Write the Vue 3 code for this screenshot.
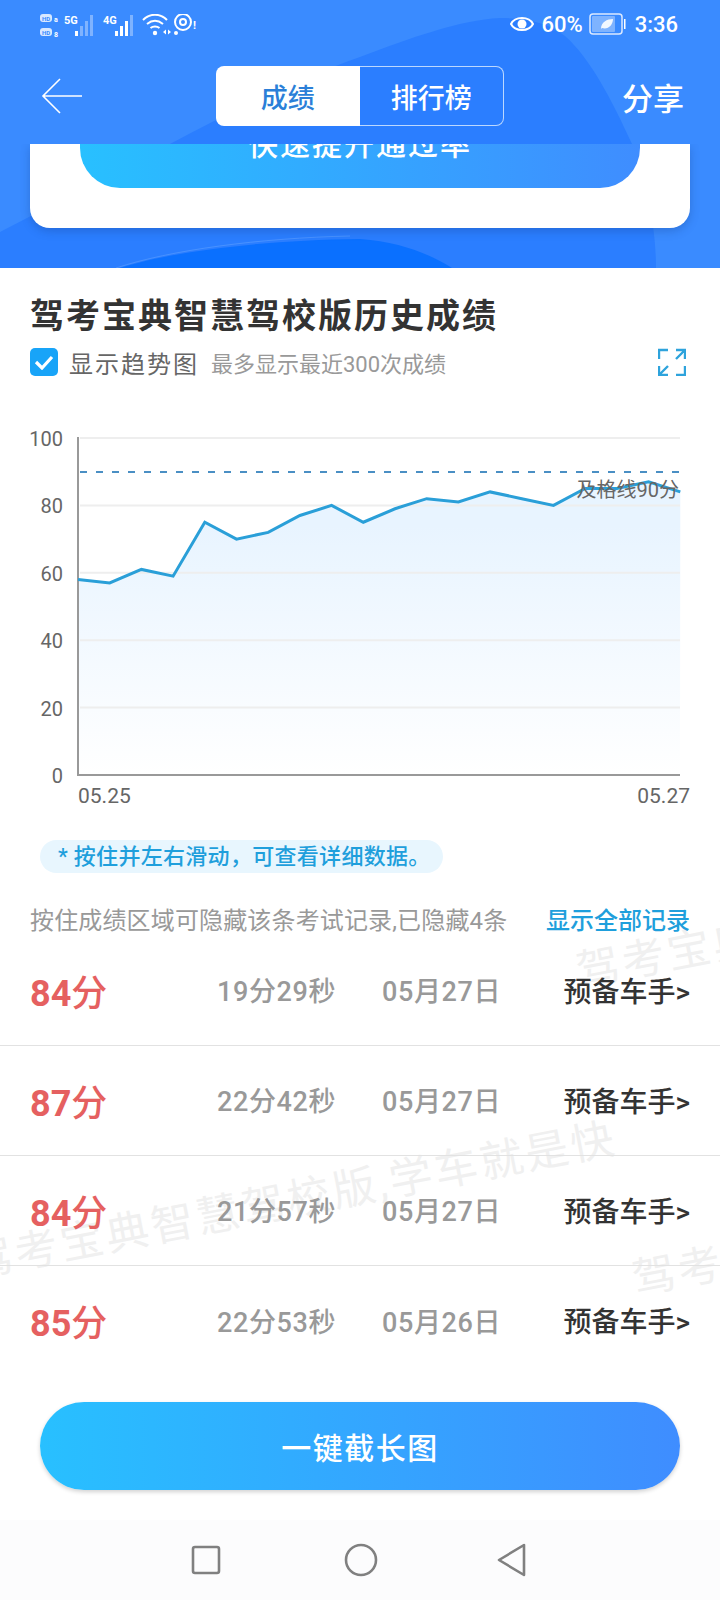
<script setup>
import { computed } from 'vue'

let scores = [58, 57, 61, 59, 75, 70, 72, 77, 80, 75, 79, 82, 81, 84, 82, 80, 85, 85, 87, 84]
let ticks = [100, 80, 60, 40, 20, 0]

let records = [
  { id: 1, score: 84, time: '19分29秒', date: '05月27日' },
  { id: 2, score: 87, time: '22分42秒', date: '05月27日' },
  { id: 3, score: 84, time: '21分57秒', date: '05月27日' },
  { id: 4, score: 85, time: '22分53秒', date: '05月26日' },
]

let marks = [
  { id: 1, left: 577, top: 950 },
  { id: 2, left: -30, top: 1241 },
  { id: 3, left: 633, top: 1258 },
]

let toY = (v) => 355 - v * 3.37
let toX = (i) => 78 + i * 31.7

let linePoints = computed(() => scores.map((v, i) => `${toX(i)},${toY(v)}`).join(' '))
let areaPoints = computed(() => `78,355 ${linePoints.value} 680,355`)
</script>

<template>
  <div class="page">
    <div
      v-for="m in marks"
      :key="m.id"
      class="watermark"
      :style="{ left: m.left + 'px', top: m.top + 'px' }"
    >驾考宝典智慧驾校版,学车就是快</div>

    <section class="hero">
      <svg class="hero-bg" width="720" height="268" viewBox="0 0 720 268">
        <path d="M170 144 C 230 112 300 78 360 57 C 410 38 460 20 500 18 C 530 18 550 24 565 36 C 590 58 612 100 632 144 C 648 185 656 230 656 268 L 0 268 L 0 232 Z" fill="#2b7eff" />
        <path d="M120 268 C 170 252 260 240 360 239 C 400 242 430 254 452 268 Z" fill="#0a70ff" />
        <path d="M116 268 C 170 250 260 238 350 236" fill="none" stroke="#5c9fff" stroke-width="1" opacity=".6" />
      </svg>

      <div class="status-bar">
        <svg class="status-left" width="170" height="30" viewBox="0 0 170 30">
          <g fill="#fff" font-family="Roboto, sans-serif" font-weight="700">
            <rect x="0" y="0" width="12" height="8" rx="3" opacity=".8" />
            <rect x="0" y="14" width="12" height="8" rx="3" opacity=".8" />
            <text x="14" y="8" font-size="7">a</text>
            <text x="14" y="23" font-size="7">8</text>
            <text x="24" y="10" font-size="11">5G</text>
            <text x="63" y="10" font-size="11">4G</text>
            <text x="2" y="6.500" font-size="6" fill="#3a8bff">HD</text>
            <text x="2" y="20.500" font-size="6" fill="#3a8bff">HD</text>
          </g>
          <g fill="#fff">
            <rect x="35" y="17" width="3" height="5" />
            <g opacity=".35">
              <rect x="40" y="12" width="3" height="10" />
              <rect x="45" y="7" width="3" height="15" />
              <rect x="50" y="1" width="3" height="21" />
            </g>
            <rect x="75" y="17" width="3" height="5" />
            <rect x="80" y="12" width="3" height="10" />
            <rect x="85" y="7" width="3" height="15" />
            <rect x="90" y="1" width="3" height="21" opacity=".35" />
            <circle cx="115" cy="19" r="2.2" />
            <path d="M123 18 l3 -2.500 v5 Z M128 15.500 l3 2.500 l-3 2.500 Z" />
            <circle cx="136" cy="19" r="2" />
            <text x="153" y="15" font-size="11" font-weight="700" font-family="Roboto, sans-serif">!</text>
          </g>
          <g fill="none" stroke="#fff" stroke-width="2">
            <path d="M103 6 C 110 -1 120 -1 127 6" />
            <path d="M107 10 C 112 6 118 6 123 10" />
            <path d="M110.500 14 C 113 12 117 12 119.500 14" />
            <circle cx="143" cy="8" r="8" />
            <circle cx="143" cy="8" r="3" />
          </g>
        </svg>
        <div class="status-right">
          <svg width="24" height="18" viewBox="0 0 24 18">
            <path d="M1 9 C 5 1 19 1 23 9 C 19 17 5 17 1 9 Z" fill="none" stroke="#fff" stroke-width="2" />
            <circle cx="12" cy="9" r="4.500" fill="#fff" />
          </svg>
          <span class="percent">60%</span>
          <svg class="battery" width="37" height="22" viewBox="0 0 37 22">
            <rect x="1" y="1" width="32" height="20" rx="3" fill="none" stroke="#dbe9ff" stroke-width="1.500" />
            <rect x="3" y="3" width="23" height="16" rx="1" fill="#fff" opacity=".35" />
            <path d="M12 16 C 12 9 18 6 24 6 C 24 12 19 17 13 15 Z" fill="#fff" opacity=".9" />
            <rect x="35" y="6" width="1.500" height="10" fill="#fff" />
          </svg>
          <span class="clock">3:36</span>
        </div>
      </div>

      <div class="nav">
        <svg class="back" width="42" height="36" viewBox="0 0 42 36">
          <path d="M41 18 H2 M19 1 L2 18 L19 35" fill="none" stroke="#fff" stroke-width="1.600" />
        </svg>
        <div class="tabs">
          <div class="tab active">成绩</div>
          <div class="tab">排行榜</div>
        </div>
        <div class="share">分享</div>
      </div>

      <div class="card">
        <div class="card-btn">快速提升通过率</div>
      </div>
    </section>

    <main class="content">
      <h1 class="title">驾考宝典智慧驾校版历史成绩</h1>

      <div class="controls">
        <span class="check">
          <svg width="20" height="16" viewBox="0 0 20 16">
            <path d="M2 8 L8 14 L18 3" fill="none" stroke="#fff" stroke-width="3.200" />
          </svg>
        </span>
        <span class="check-label">显示趋势图</span>
        <span class="check-hint">最多显示最近300次成绩</span>
        <svg class="expand" width="28" height="28" viewBox="0 0 28 28">
          <path d="M1 11 V2 H10 M18 2 H27 V11 M27 2 L18 11 M1 18 V27 H10 M1 27 L10 18 M27 18 V27 H18" fill="none" stroke="#2ea3dc" stroke-width="2.400" />
        </svg>
      </div>

      <svg class="chart" width="720" height="400" viewBox="0 0 720 400">
        <defs>
          <linearGradient id="area" x1="0" y1="0" x2="0" y2="1">
            <stop offset="0.15" stop-color="#e8f4ff" />
            <stop offset="1" stop-color="#ffffff" />
          </linearGradient>
        </defs>
        <polygon :points="areaPoints" fill="url(#area)" />
        <line
          v-for="t in ticks.slice(0, 5)"
          :key="t"
          x1="80"
          x2="680"
          :y1="toY(t)"
          :y2="toY(t)"
          stroke="#eeeeee"
          stroke-width="2"
        />
        <line x1="78" y1="17" x2="78" y2="356" stroke="#999" stroke-width="2" />
        <line x1="77" y1="355" x2="680" y2="355" stroke="#999" stroke-width="2" />
        <line x1="80" y1="52" x2="680" y2="52" stroke="#4a8fc4" stroke-width="2" stroke-dasharray="7 9" />
        <polyline :points="linePoints" fill="none" stroke="#2a9fd8" stroke-width="3" />
        <text
          v-for="t in ticks"
          :key="'l' + t"
          class="tick-text"
          x="63"
          :y="toY(t) + 8"
          text-anchor="end"
        >{{ t }}</text>
        <text class="axis-text" x="78" y="383">05.25</text>
        <text class="axis-text" x="690" y="383" text-anchor="end">05.27</text>
        <text class="pass-text" x="679" y="77" text-anchor="end">及格线90分</text>
      </svg>

      <div class="pill">* 按住并左右滑动，可查看详细数据。</div>

      <div class="note">
        <span class="note-text">按住成绩区域可隐藏该条考试记录,已隐藏4条</span>
        <span class="show-all">显示全部记录</span>
      </div>

      <ul class="records">
        <li v-for="r in records" :key="r.id" class="record">
          <span class="score"><b>{{ r.score }}</b>分</span>
          <span class="cell">{{ r.time }}</span>
          <span class="cell">{{ r.date }}</span>
          <span class="level">预备车手&gt;</span>
        </li>
      </ul>

      <div class="shot-btn">一键截长图</div>
    </main>

    <footer class="sys-nav">
      <svg class="sys-square" width="30" height="30" viewBox="0 0 30 30">
        <rect x="2" y="2" width="26" height="26" rx="2" fill="none" stroke="#808080" stroke-width="2.600" />
      </svg>
      <svg width="34" height="34" viewBox="0 0 34 34">
        <circle cx="17" cy="17" r="15" fill="none" stroke="#808080" stroke-width="2.600" />
      </svg>
      <svg class="sys-back" width="30" height="34" viewBox="0 0 30 34">
        <path d="M27 2 V32 L2 17 Z" fill="none" stroke="#808080" stroke-width="2.600" stroke-linejoin="round" />
      </svg>
    </footer>
  </div>
</template>

<style scoped>
.page {
  position: relative;
  width: 720px;
  height: 1600px;
  overflow: hidden;
  background: #fff;
  font-family: Roboto, "Noto Sans CJK SC", sans-serif;
}

.watermark {
  position: absolute;
  z-index: 0;
  white-space: nowrap;
  font-size: 43px;
  line-height: 44px;
  letter-spacing: 3.200px;
  color: #f0f0f0;
  transform: rotate(-11deg);
  transform-origin: left center;
}

.hero {
  position: relative;
  height: 268px;
  background: #3a8bff;
  overflow: hidden;
}
.hero-bg {
  position: absolute;
  left: 0;
  top: 0;
}

.status-bar {
  position: relative;
  display: flex;
  justify-content: space-between;
  align-items: center;
  height: 48px;
  padding: 0 42px 0 40px;
}
.status-left {
  margin-top: 10px;
}
.status-right {
  display: flex;
  align-items: center;
  color: #fff;
}
.percent {
  margin-left: 7px;
  font-size: 22px;
  font-weight: 500;
}
.battery {
  margin-left: 6px;
}
.clock {
  margin-left: 9px;
  font-size: 22px;
  font-weight: 500;
}

.nav {
  position: relative;
  display: grid;
  grid-template-columns: 1fr auto 1fr;
  align-items: center;
  height: 96px;
  padding: 0 36px;
}
.back {
  margin-left: 5px;
}
.tabs {
  display: flex;
  width: 288px;
  height: 60px;
}
.tab {
  flex: 1;
  display: flex;
  align-items: center;
  justify-content: center;
  font-size: 27px;
  font-weight: 500;
  color: #fff;
  border: 1px solid #bcd8ff;
  border-left: none;
  border-radius: 0 8px 8px 0;
}
.tab.active {
  background: #fff;
  color: #2b7fd8;
  border: none;
  border-radius: 8px 0 0 8px;
}
.share {
  justify-self: end;
  font-size: 31px;
  font-weight: 500;
  color: #fff;
}

.card {
  display: flow-root;
  position: relative;
  height: 84px;
  margin: 0 30px;
  background: #fff;
  border-radius: 0 0 20px 20px;
  box-shadow: 0 3px 10px rgba(20, 60, 130, 0.3);
  clip-path: inset(0 -20px -20px -20px);
}
.card-btn {
  display: flex;
  align-items: center;
  justify-content: center;
  height: 88px;
  margin: -44px 50px 0;
  padding-bottom: 5px;
  box-sizing: border-box;
  border-radius: 0 0 40px 40px;
  background: linear-gradient(90deg, #28c0ff, #3f8dff);
  color: #fff;
  font-size: 30px;
  font-weight: 500;
  letter-spacing: 2px;
}

.content {
  position: relative;
}
.title {
  margin: 24px 0 0 30px;
  font-size: 34px;
  line-height: 48px;
  font-weight: 700;
  letter-spacing: 2px;
  color: #333;
}
.controls {
  display: flex;
  align-items: center;
  height: 28px;
  margin: 8px 34px 0 30px;
}
.check {
  display: flex;
  align-items: center;
  justify-content: center;
  width: 28px;
  height: 28px;
  border-radius: 5px;
  background: #18a4f8;
}
.check-label {
  margin-left: 11px;
  font-size: 24px;
  letter-spacing: 2px;
  color: #666;
}
.check-hint {
  margin-left: 12px;
  font-size: 22px;
  color: #999;
}
.expand {
  margin-left: auto;
}

.chart {
  display: block;
  margin-top: 44px;
}
.tick-text {
  font-size: 20px;
  fill: #666;
}
.axis-text {
  font-size: 21px;
  fill: #666;
}
.pass-text {
  font-size: 20px;
  fill: #666;
}

.pill {
  width: 403px;
  height: 33px;
  margin: 20px 0 0 40px;
  padding-left: 18px;
  box-sizing: border-box;
  border-radius: 17px;
  background: #e8f6fe;
  color: #1f9fdc;
  font-size: 22px;
  line-height: 33px;
  font-weight: 500;
  letter-spacing: 0.300px;
  white-space: nowrap;
}

.note {
  display: flex;
  justify-content: space-between;
  align-items: center;
  height: 30px;
  margin: 30px 30px 3px;
  font-size: 24px;
  color: #999;
}
.note-text {
  letter-spacing: 0.150px;
}
.show-all {
  font-size: 24px;
  font-weight: 500;
  color: #1f9fdc;
}

.records {
  margin: 0;
  padding: 0;
  list-style: none;
}
.record {
  display: grid;
  grid-template-columns: 187px 165px 1fr auto;
  align-items: center;
  height: 110px;
  padding: 0 30px 2px;
  box-sizing: border-box;
  border-bottom: 1px solid #e2e2e2;
}
.record:last-child {
  border-bottom: none;
}
.score {
  font-size: 36px;
  font-weight: 500;
  color: #e56060;
}
.score b {
  font-weight: 700;
}
.cell {
  font-size: 27px;
  font-weight: 500;
  letter-spacing: 0.600px;
  color: #999;
}
.level {
  font-size: 28px;
  font-weight: 500;
  color: #333;
}

.shot-btn {
  display: flex;
  align-items: center;
  justify-content: center;
  height: 88px;
  margin: 26px 40px 0;
  border-radius: 44px;
  background: linear-gradient(90deg, #28c0ff, #3f8dff);
  box-shadow: 0 2px 4px rgba(0, 0, 0, 0.18);
  color: #fff;
  font-size: 30px;
  font-weight: 500;
  letter-spacing: 1.500px;
}

.sys-nav {
  position: absolute;
  left: 0;
  right: 0;
  bottom: 0;
  height: 80px;
  padding-right: 3px;
  box-sizing: border-box;
  background: #fcfcfd;
  display: flex;
  align-items: center;
  justify-content: center;
  gap: 121px;
}
.sys-square {
  margin-right: 2px;
}
.sys-back {
  margin-left: -2px;
}
</style>

<style>
html, body {
  margin: 0;
  background: #fff;
}
</style>
